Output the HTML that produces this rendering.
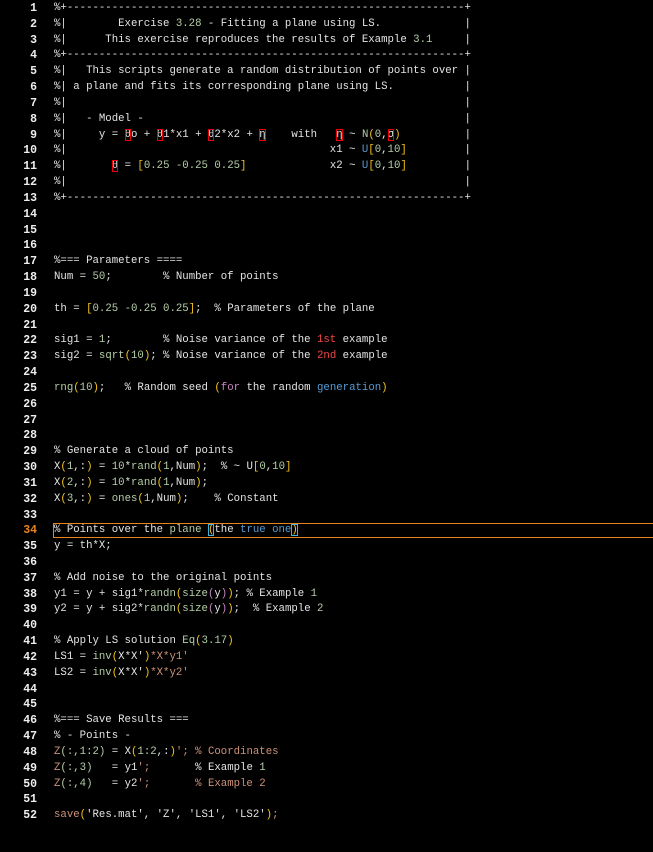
<!DOCTYPE html>
<html><head><meta charset="utf-8"><style>
html,body{margin:0;padding:0;background:#000;width:653px;height:852px;overflow:hidden}
body{font-family:"Liberation Mono","DejaVu Sans Mono",monospace;font-size:10.7px;color:#e4e4e4;position:relative}
#wrap{position:absolute;top:1px;left:0;width:653px}
.l{height:15.84px;line-height:15.84px;white-space:pre;position:relative}
.n{position:absolute;left:0;width:37px;text-align:right;color:#eee;font-weight:bold;font-size:11.5px}
.c{position:absolute;left:54px}
.g{color:#b5cea8}.y{color:#f5c518}.p{color:#c586c0}.s{color:#ce9178}.r{color:#f44747}.b{color:#569cd6}.k{color:#c586c0}
.bx{outline:1px solid #e00;outline-offset:-1px}
.hl{position:absolute;left:53px;top:0;width:610px;height:15px;border:1px solid #e8841a;box-sizing:border-box}
.cb{outline:1px solid #3cb4e6;outline-offset:-1px}
</style></head><body><div id="wrap">
<div class="l"><span class="n">1</span><span class="c">%+--------------------------------------------------------------+</span></div>
<div class="l"><span class="n">2</span><span class="c">%|        Exercise <span class="g">3.28</span> - Fitting a plane using LS.             |</span></div>
<div class="l"><span class="n">3</span><span class="c">%|      This exercise reproduces the results of Example <span class="g">3.1</span>     |</span></div>
<div class="l"><span class="n">4</span><span class="c">%+--------------------------------------------------------------+</span></div>
<div class="l"><span class="n">5</span><span class="c">%|   This scripts generate a random distribution of points over |</span></div>
<div class="l"><span class="n">6</span><span class="c">%| a plane and fits its corresponding plane using LS.           |</span></div>
<div class="l"><span class="n">7</span><span class="c">%|                                                              |</span></div>
<div class="l"><span class="n">8</span><span class="c">%|   - Model -                                                  |</span></div>
<div class="l"><span class="n">9</span><span class="c">%|     y = <span class="bx">θ</span>o + <span class="bx">θ</span>1*x1 + <span class="bx">θ</span>2*x2 + <span class="bx">η</span>    with   <span class="bx">η</span> ~ <span class="g">N</span><span class="y">(</span><span class="g">0</span>,<span class="bx">σ</span><span class="y">)</span>          |</span></div>
<div class="l"><span class="n">10</span><span class="c">%|                                         x1 ~ <span class="b">U</span><span class="y">[</span><span class="g">0</span>,<span class="g">10</span><span class="y">]</span>         |</span></div>
<div class="l"><span class="n">11</span><span class="c">%|       <span class="bx">θ</span> = <span class="y">[</span><span class="g">0.25 -0.25 0.25</span><span class="y">]</span>             x2 ~ <span class="b">U</span><span class="y">[</span><span class="g">0</span>,<span class="g">10</span><span class="y">]</span>         |</span></div>
<div class="l"><span class="n">12</span><span class="c">%|                                                              |</span></div>
<div class="l"><span class="n">13</span><span class="c">%+--------------------------------------------------------------+</span></div>
<div class="l"><span class="n">14</span></div>
<div class="l"><span class="n">15</span></div>
<div class="l"><span class="n">16</span></div>
<div class="l"><span class="n">17</span><span class="c">%=== Parameters ====</span></div>
<div class="l"><span class="n">18</span><span class="c">Num = <span class="g">50</span>;        % Number of points</span></div>
<div class="l"><span class="n">19</span></div>
<div class="l"><span class="n">20</span><span class="c">th = <span class="y">[</span><span class="g">0.25 -0.25 0.25</span><span class="y">]</span>;  % Parameters of the plane</span></div>
<div class="l"><span class="n">21</span></div>
<div class="l"><span class="n">22</span><span class="c">sig1 = <span class="g">1</span>;        % Noise variance of the <span class="r">1st</span> example</span></div>
<div class="l"><span class="n">23</span><span class="c">sig2 = <span class="g">sqrt</span><span class="y">(</span><span class="g">10</span><span class="y">)</span>; % Noise variance of the <span class="r">2nd</span> example</span></div>
<div class="l"><span class="n">24</span></div>
<div class="l"><span class="n">25</span><span class="c"><span class="g">rng</span><span class="y">(</span><span class="g">10</span><span class="y">)</span>;   % Random seed <span class="y">(</span><span class="k">for</span> the random <span class="b">generation</span><span class="y">)</span></span></div>
<div class="l"><span class="n">26</span></div>
<div class="l"><span class="n">27</span></div>
<div class="l"><span class="n">28</span></div>
<div class="l"><span class="n">29</span><span class="c">% Generate a cloud of points</span></div>
<div class="l"><span class="n">30</span><span class="c">X<span class="y">(</span><span class="g">1</span>,:<span class="y">)</span> = <span class="g">10</span>*<span class="g">rand</span><span class="y">(</span><span class="g">1</span>,Num<span class="y">)</span>;  % ~ U<span class="y">[</span><span class="g">0</span>,<span class="g">10</span><span class="y">]</span></span></div>
<div class="l"><span class="n">31</span><span class="c">X<span class="y">(</span><span class="g">2</span>,:<span class="y">)</span> = <span class="g">10</span>*<span class="g">rand</span><span class="y">(</span><span class="g">1</span>,Num<span class="y">)</span>;</span></div>
<div class="l"><span class="n">32</span><span class="c">X<span class="y">(</span><span class="g">3</span>,:<span class="y">)</span> = <span class="g">ones</span><span class="y">(</span><span class="g">1</span>,Num<span class="y">)</span>;    % Constant</span></div>
<div class="l"><span class="n">33</span></div>
<div class="l"><span class="n" style="color:#e8841a">34</span><span class="hl"></span><span class="c">% Points over the <span class="g">plane</span> <span class="y cb">(</span>the <span class="b">true one</span><span class="y cb">)</span></span></div>
<div class="l"><span class="n">35</span><span class="c">y = th*X;</span></div>
<div class="l"><span class="n">36</span></div>
<div class="l"><span class="n">37</span><span class="c">% Add noise to the original points</span></div>
<div class="l"><span class="n">38</span><span class="c">y1 = y + sig1*<span class="g">randn</span><span class="y">(</span><span class="g">size</span><span class="p">(</span>y<span class="p">)</span><span class="y">)</span>; % Example <span class="g">1</span></span></div>
<div class="l"><span class="n">39</span><span class="c">y2 = y + sig2*<span class="g">randn</span><span class="y">(</span><span class="g">size</span><span class="p">(</span>y<span class="p">)</span><span class="y">)</span>;  % Example <span class="g">2</span></span></div>
<div class="l"><span class="n">40</span></div>
<div class="l"><span class="n">41</span><span class="c">% Apply LS solution <span class="g">Eq</span><span class="y">(</span><span class="g">3.17</span><span class="y">)</span></span></div>
<div class="l"><span class="n">42</span><span class="c">LS1 = <span class="g">inv</span><span class="y">(</span>X*X'<span class="y">)</span><span class="s">*X*y1'</span></span></div>
<div class="l"><span class="n">43</span><span class="c">LS2 = <span class="g">inv</span><span class="y">(</span>X*X'<span class="y">)</span><span class="s">*X*y2'</span></span></div>
<div class="l"><span class="n">44</span></div>
<div class="l"><span class="n">45</span></div>
<div class="l"><span class="n">46</span><span class="c">%=== Save Results ===</span></div>
<div class="l"><span class="n">47</span><span class="c">% - Points -</span></div>
<div class="l"><span class="n">48</span><span class="c"><span class="s">Z</span><span class="g">(:,1:2)</span> = X<span class="y">(</span><span class="g">1:2</span>,:<span class="y">)</span><span class="s">'; % Coordinates</span></span></div>
<div class="l"><span class="n">49</span><span class="c"><span class="s">Z</span><span class="g">(:,3)</span>   = y1<span class="s">';</span>       % Example <span class="g">1</span></span></div>
<div class="l"><span class="n">50</span><span class="c"><span class="s">Z</span><span class="g">(:,4)</span>   = y2<span class="s">';       % Example 2</span></span></div>
<div class="l"><span class="n">51</span></div>
<div class="l"><span class="n">52</span><span class="c"><span class="s">save</span><span class="y">(</span>'Res.mat', 'Z', 'LS1', 'LS2'<span class="y">)</span><span class="s">;</span></span></div>
</div></body></html>
